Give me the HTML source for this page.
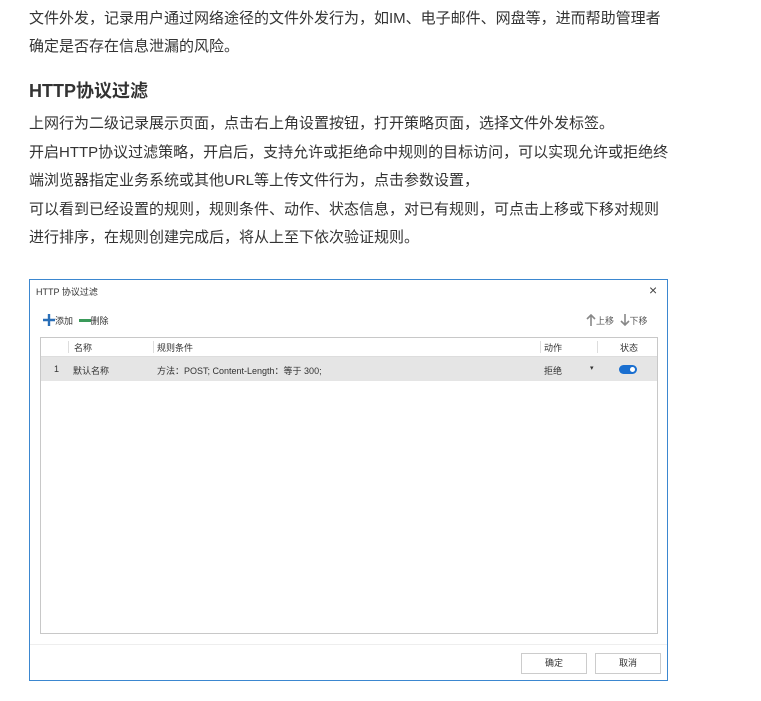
<html><head><style>
body{margin:0;background:#fff;font-family:"Liberation Sans","Noto Sans CJK SC",sans-serif;color:#333;}
.p{position:absolute;left:29px;font-size:15px;white-space:nowrap;}
.d{position:absolute;left:29px;top:279px;width:637px;height:400px;border:1px solid #3b87d0;background:#fff;font-size:9px;color:#333}
.a{position:absolute;white-space:nowrap}
</style></head><body>
<div class="p" style="top:7px">文件外发，记录用户通过网络途径的文件外发行为，如IM、电子邮件、网盘等，进而帮助管理者</div>
<div class="p" style="top:35px">确定是否存在信息泄漏的风险。</div>
<div class="p" style="top:77px;font-size:18px;font-weight:bold">HTTP协议过滤</div>
<div class="p" style="top:112px">上网行为二级记录展示页面，点击右上角设置按钮，打开策略页面，选择文件外发标签。</div>
<div class="p" style="top:141px">开启HTTP协议过滤策略，开启后，支持允许或拒绝命中规则的目标访问，可以实现允许或拒绝终</div>
<div class="p" style="top:169px">端浏览器指定业务系统或其他URL等上传文件行为，点击参数设置，</div>
<div class="p" style="top:198px">可以看到已经设置的规则，规则条件、动作、状态信息，对已有规则，可点击上移或下移对规则</div>
<div class="p" style="top:226px">进行排序，在规则创建完成后，将从上至下依次验证规则。</div>
<div class="d">
<div class="a" style="left:6px;top:5px">HTTP 协议过滤</div>
<div class="a" style="left:619px;top:2px;font-size:14px;color:#444">×</div>
<div class="a" style="left:13px;top:34px">
<svg width="12" height="12" style="vertical-align:-2px"><path d="M6 0v12M0 6h12" stroke="#2a6fb8" stroke-width="2.4"/></svg>添加
<svg width="12" height="4" style="vertical-align:1px;margin-left:3px"><rect width="12" height="3" fill="#3a9a5a"/></svg>删除</div>
<div class="a" style="left:556px;top:34px;color:#555">
<svg width="10" height="12" style="vertical-align:-2px"><path d="M5 12V1M1 5l4-4 4 4" stroke="#888" stroke-width="1.6" fill="none"/></svg>上移
<svg width="10" height="12" style="vertical-align:-2px;margin-left:3px"><path d="M5 0v11M1 7l4 4 4-4" stroke="#888" stroke-width="1.6" fill="none"/></svg>下移</div>
<div class="a" style="left:10px;top:57px;width:616px;height:295px;border:1px solid #c8c8c8">
<div class="a" style="left:0;top:0;width:616px;height:18px;border-bottom:1px solid #ddd"></div>
<div class="a" style="left:27px;top:3px;border-left:1px solid #ddd;height:12px;padding-left:5px">名称</div>
<div class="a" style="left:112px;top:3px;border-left:1px solid #ddd;height:12px;padding-left:3px">规则条件</div>
<div class="a" style="left:499px;top:3px;border-left:1px solid #ddd;height:12px;padding-left:3px">动作</div>
<div class="a" style="left:556px;top:3px;border-left:1px solid #ddd;height:12px;padding-left:22px">状态</div>
<div class="a" style="left:0;top:19px;width:616px;height:24px;background:#e5e5e5"></div>
<div class="a" style="left:13px;top:26px">1</div>
<div class="a" style="left:32px;top:26px">默认名称</div>
<div class="a" style="left:116px;top:26px">方法：POST; Content-Length：等于 300;</div>
<div class="a" style="left:503px;top:26px">拒绝</div>
<div class="a" style="left:549px;top:26px;font-size:7px">▾</div>
<div class="a" style="left:578px;top:27px;width:18px;height:9px;border-radius:5px;background:#1a6fd0"><div style="position:absolute;right:2px;top:2px;width:5px;height:5px;border-radius:50%;background:#fff"></div></div>
</div>
<div class="a" style="left:0;top:364px;width:637px;height:1px;background:#eee"></div>
<div class="a" style="left:491px;top:373px;width:64px;height:19px;border:1px solid #ccc;text-align:center;line-height:19px">确定</div>
<div class="a" style="left:565px;top:373px;width:64px;height:19px;border:1px solid #ccc;text-align:center;line-height:19px">取消</div>
</div>
</body></html>
